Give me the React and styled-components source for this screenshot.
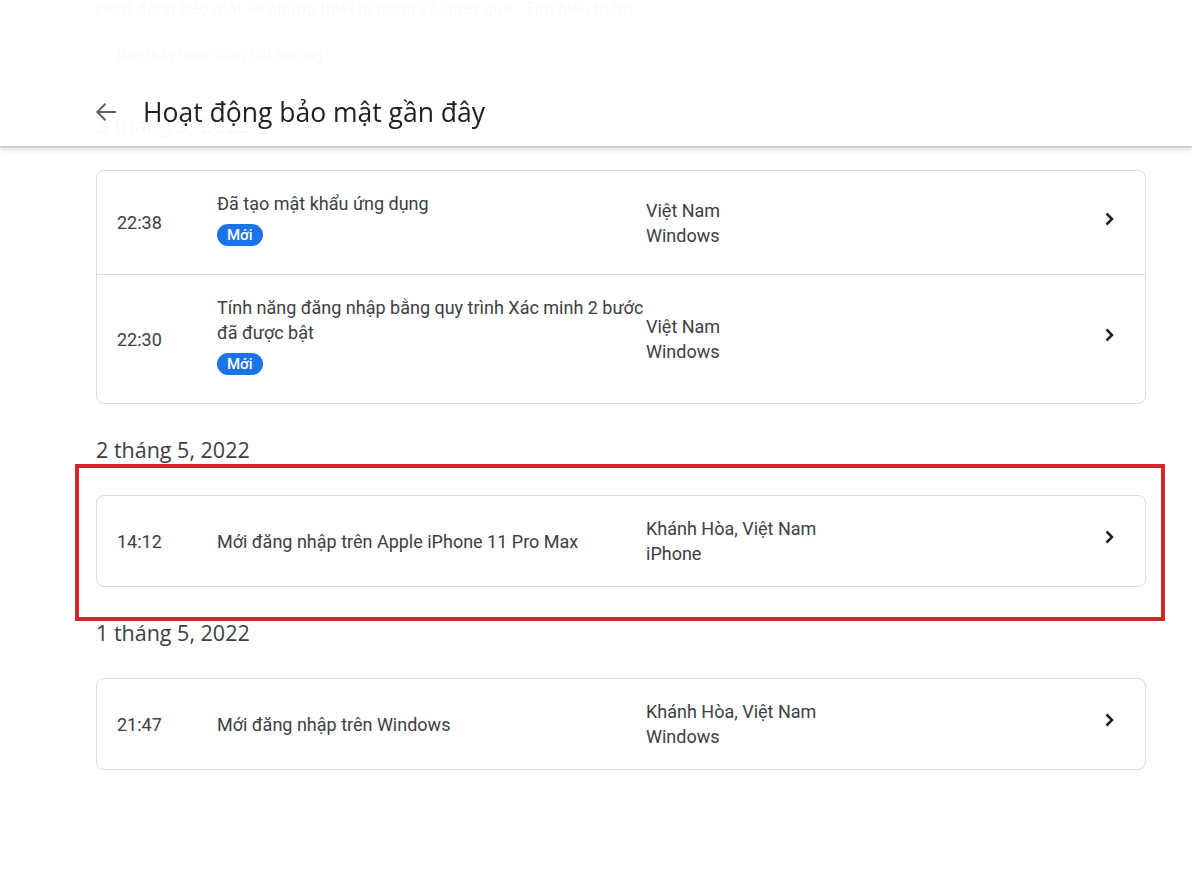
import React from 'react';
import styled, { createGlobalStyle } from 'styled-components';

const GlobalStyle = createGlobalStyle`
  body {
    margin: 0;
    background: #fff;
    font-family: Roboto, 'Liberation Sans', sans-serif;
    color: #3c4043;
  }
`;

const events = [
  {
    date: '3 tháng 5, 2022',
    items: [
      { time: '22:38', title: 'Đã tạo mật khẩu ứng dụng', isNew: true, place: 'Việt Nam', device: 'Windows' },
      {
        time: '22:30',
        title: 'Tính năng đăng nhập bằng quy trình Xác minh 2 bước đã được bật',
        isNew: true,
        place: 'Việt Nam',
        device: 'Windows',
      },
    ],
  },
  {
    date: '2 tháng 5, 2022',
    marked: true,
    items: [
      { time: '14:12', title: 'Mới đăng nhập trên Apple iPhone 11 Pro Max', place: 'Khánh Hòa, Việt Nam', device: 'iPhone' },
    ],
  },
  {
    date: '1 tháng 5, 2022',
    items: [{ time: '21:47', title: 'Mới đăng nhập trên Windows', place: 'Khánh Hòa, Việt Nam', device: 'Windows' }],
  },
];

function ArrowBack() {
  return (
    <svg width='22' height='22' viewBox='0 0 22 22'>
      <path d='M21 11H2.5M10.5 2.8L2.3 11l8.2 8.2' fill='none' stroke='#5f6368' strokeWidth='2' />
    </svg>
  );
}

function Chevron() {
  return (
    <svg width='24' height='24' viewBox='0 0 24 24'>
      <path d='M9.5 6.5l5.5 5.5-5.5 5.5' fill='none' stroke='#202124' strokeWidth='2.5' />
    </svg>
  );
}

function EventRow({ item }) {
  return (
    <Row>
      <Time>{item.time}</Time>
      <Desc>
        <div>{item.title}</div>
        {item.isNew && <Badge>Mới</Badge>}
      </Desc>
      <Place>
        <div>{item.place}</div>
        <div>{item.device}</div>
      </Place>
      <ChevronCell>
        <Chevron />
      </ChevronCell>
    </Row>
  );
}

export default function App() {
  return (
    <>
      <GlobalStyle />
      <Header>
        <BackButton>
          <ArrowBack />
        </BackButton>
        <Title>Hoạt động bảo mật gần đây</Title>
      </Header>
      <Page>
        <Intro>Hoạt động bảo mật về những thiết bị trong 28 ngày qua · Tìm hiểu thêm</Intro>
        <Unusual>Bạn thấy hoạt động bất thường?</Unusual>
        {events.map((group) => (
          <Section key={group.date}>
            <DateHeading>{group.date}</DateHeading>
            {group.marked ? (
              <Marker>
                <Card>
                  {group.items.map((item) => (
                    <EventRow key={item.time} item={item} />
                  ))}
                </Card>
              </Marker>
            ) : (
              <Card>
                {group.items.map((item) => (
                  <EventRow key={item.time} item={item} />
                ))}
              </Card>
            )}
          </Section>
        ))}
      </Page>
    </>
  );
}

const Header = styled.header`
  position: fixed;
  top: 0;
  left: 0;
  right: 0;
  height: 146px;
  z-index: 10;
  background: rgba(255, 255, 255, 0.97);
  box-shadow: 0 1px 2px rgba(60, 64, 67, 0.3), 0 2px 6px 2px rgba(60, 64, 67, 0.15);
  display: flex;
  align-items: flex-end;
  padding: 0 0 14px 95px;
  box-sizing: border-box;
  gap: 26px;
`;

const BackButton = styled.div`
  display: flex;
  align-items: center;
  height: 40px;
`;

const Title = styled.h1`
  margin: 0;
  font-family: 'Open Sans', Roboto, sans-serif;
  font-weight: 400;
  font-size: 26.5px;
  line-height: 40px;
  color: #202124;
`;

const Page = styled.main`
  width: 1050px;
  margin: 0 0 0 96px;
  padding-bottom: 80px;
`;

const Intro = styled.p`
  margin: -4px 0 0;
  font-size: 17px;
  line-height: 24px;
`;

const Unusual = styled.div`
  margin: 23px 0 0 21px;
  font-size: 15px;
  line-height: 24px;
  color: #3c4043;
`;

const Section = styled.section`
  margin-top: 32px;

  &:first-of-type {
    margin-top: 44px;
  }
`;

const DateHeading = styled.h2`
  margin: 0 0 31px;
  font-family: 'Open Sans', Roboto, sans-serif;
  font-weight: 400;
  font-size: 21.5px;
  line-height: 28px;
  color: #3c4043;
`;

const Marker = styled.div`
  margin: -31px -19px -34px -21px;
  padding: 27px 15px 30px 17px;
  border: 4px solid #d7232e;
`;

const Card = styled.div`
  border: 1px solid #dadce0;
  border-radius: 8px;
  background: #fff;
`;

const Row = styled.div`
  display: grid;
  grid-template-columns: 120px 429px 1fr 48px;
  align-items: center;
  padding: 20px 0;
  font-size: 18px;
  line-height: 25px;
  color: #3c4043;

  & + & {
    border-top: 1px solid #dadce0;
  }
`;

const Time = styled.div`
  padding-left: 20px;
`;

const Desc = styled.div`
  display: flex;
  flex-direction: column;
  align-items: flex-start;
`;

const Badge = styled.span`
  margin: 8px 0;
  height: 22px;
  padding: 0 10px;
  border-radius: 11px;
  background: #1a73e8;
  color: #fff;
  font-size: 15px;
  font-weight: 500;
  line-height: 22px;
`;

const Place = styled.div`
  line-height: 25px;
`;

const ChevronCell = styled.div`
  display: flex;
  align-items: center;
  margin-top: -8px;
`;
